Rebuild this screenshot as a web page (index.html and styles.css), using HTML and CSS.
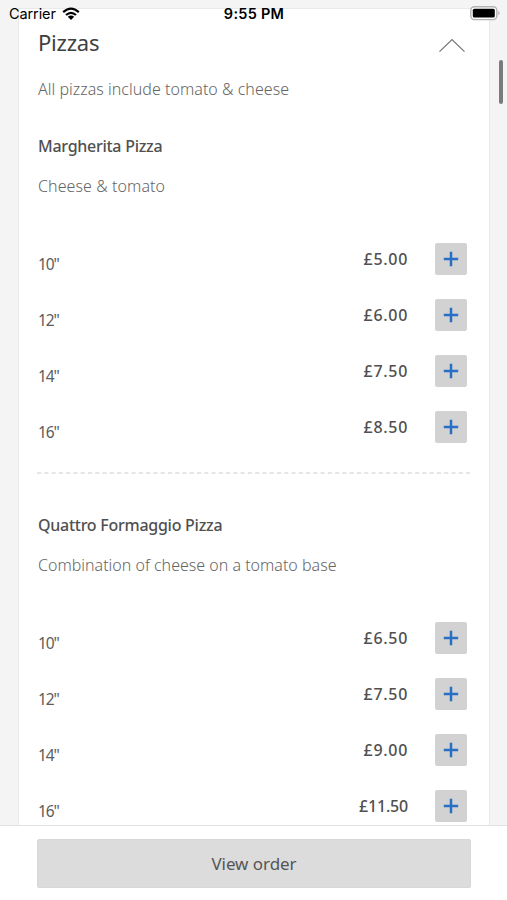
FILE: index.html
```html
<!DOCTYPE html>
<html lang="en">
<head>
<meta charset="utf-8">
<title>Menu</title>
<link rel="stylesheet" href="styles.css">
</head>
<body>
<svg class="defs" width="0" height="0" aria-hidden="true"><symbol id="plus" viewBox="0 0 16 16"><path d="M8 .8v14.4M.8 8h14.4" fill="none" stroke="#2870c5" stroke-width="2.5"/></symbol></svg>
<header class="status">
  <div class="network"><span class="carrier">Carrier</span>
    <svg class="wifi" width="18" height="14" viewBox="0 0 18 14"><path d="M1.2 5.1Q9-2 16.8 5.1M4 8Q9 3.6 14 8" fill="none" stroke="#000" stroke-width="2.2"/><path d="M5.8 9.7Q9 7.2 12.2 9.7L9 13z"/></svg>
  </div>
  <div class="time">9:55 PM</div>
  <svg class="battery" width="31" height="15" viewBox="0 0 31 15"><rect x=".8" y=".8" width="26" height="12.8" rx="3.5" fill="#fff" stroke="#b3b3b3" stroke-width="1.4"/><rect x="2.8" y="2.8" width="22" height="8.8" rx="1.5"/><path d="M28.3 5q2.5 2.2 0 4.4z" fill="#aaa"/></svg>
</header>
<main class="menu">
  <section class="card">
    <div class="section-head">
      <h1 class="title">Pizzas</h1>
      <svg class="chevron" width="28" height="15" viewBox="0 0 28 15"><path d="M1.5 13.6L14 1.6l12.5 12" fill="none" stroke="#777" stroke-width="1.3"/></svg>
    </div>
    <p class="note"><span class="w-note">All pizzas include tomato &amp; cheese</span></p>
    <article class="item">
      <h2 class="name"><span class="w-marg">Margherita Pizza</span></h2>
      <p class="desc"><span class="w-cheese">Cheese &amp; tomato</span></p>
      <ul class="sizes">
        <li class="row"><span class="size">10"</span><span class="price">£5.00</span><button class="add"><svg class="plus"><use href="#plus"/></svg></button></li>
        <li class="row"><span class="size">12"</span><span class="price">£6.00</span><button class="add"><svg class="plus"><use href="#plus"/></svg></button></li>
        <li class="row"><span class="size">14"</span><span class="price">£7.50</span><button class="add"><svg class="plus"><use href="#plus"/></svg></button></li>
        <li class="row"><span class="size">16"</span><span class="price">£8.50</span><button class="add"><svg class="plus"><use href="#plus"/></svg></button></li>
      </ul>
    </article>
    <svg class="divider" width="433" height="2"><path d="M0 1h433" stroke="#dedede" stroke-width="1.3" stroke-dasharray="4.2 3.07"/></svg>
    <article class="item">
      <h2 class="name"><span class="w-quattro">Quattro Formaggio Pizza</span></h2>
      <p class="desc"><span class="w-comb">Combination of cheese on a tomato base</span></p>
      <ul class="sizes">
        <li class="row"><span class="size">10"</span><span class="price">£6.50</span><button class="add"><svg class="plus"><use href="#plus"/></svg></button></li>
        <li class="row"><span class="size">12"</span><span class="price">£7.50</span><button class="add"><svg class="plus"><use href="#plus"/></svg></button></li>
        <li class="row"><span class="size">14"</span><span class="price">£9.00</span><button class="add"><svg class="plus"><use href="#plus"/></svg></button></li>
        <li class="row"><span class="size">16"</span><span class="price narrow">£11.50</span><button class="add"><svg class="plus"><use href="#plus"/></svg></button></li>
      </ul>
    </article>
  </section>
</main>
<div class="scrollbar"></div>
<footer class="order-bar"><button class="order"><span class="w-order">View order</span></button></footer>
</body>
</html>
```

FILE: styles.css
```css
* { box-sizing: border-box; margin: 0; padding: 0; }
body {
  position: relative;
  display: flex;
  flex-direction: column;
  height: 900px;
  overflow: hidden;
  background: #f4f4f4;
  color: #505050;
  font-family: "Noto Sans", "Open Sans", sans-serif;
  font-size: 16px;
}
.defs { position: absolute; }
.status {
  position: absolute;
  inset: 0 0 auto;
  height: 27px;
  display: grid;
  grid-template-columns: 1fr auto 1fr;
  align-items: center;
  padding: 0 6px 0 9px;
  color: #000;
  font: 14.5px/27px Inter, sans-serif;
}
.network { display: flex; align-items: center; gap: 6px; }
.carrier { letter-spacing: -0.1px; }
.time { font-size: 14.5px; font-weight: 600; letter-spacing: 0.25px; margin-right: 2px; }
.battery { justify-self: end; }
.menu { flex: 1; min-height: 0; overflow: hidden; padding: 8px 17px 0 18px; }
.card {
  height: 900px;
  padding: 0 19px;
  background: #fff;
  border: 1px solid #e9e9e9;
  display: flex;
  flex-direction: column;
}
.section-head { display: flex; justify-content: space-between; height: 68px; }
.title { font-size: 22px; font-weight: 400; line-height: 30px; color: #404040; margin-top: 18px; letter-spacing: -0.2px; }
.chevron { margin: 29px 4px 0 0; }
.note { height: 57px; line-height: 24px; color: #666; font-weight: 300; }
.name { font-size: 16px; font-weight: 500; line-height: 24px; height: 39.5px; }
.desc { height: 69.3px; line-height: 24px; color: #666; font-weight: 300; }
.note, .desc, .name { white-space: nowrap; }
.sizes { list-style: none; }
.row { display: flex; align-items: center; height: 56.15px; padding-right: 3px; padding-bottom: 24.15px; }
.size { flex: 1; padding-top: 10px; font-size: 15.5px; line-height: 20px; letter-spacing: -1.1px; color: #5c5c5c; }
.price { margin-right: 27px; font-size: 16px; font-weight: 500; line-height: 20px; letter-spacing: 0.7px; }
.price.narrow { letter-spacing: -0.2px; }
.add {
  display: flex;
  align-items: center;
  justify-content: center;
  width: 32px;
  height: 32px;
  border: 0;
  border-radius: 2px;
  background: #d2d2d2;
}
.plus { width: 16px; height: 16px; }
.divider { flex: none; margin: 4.2px 0 39.5px -1px; }
.scrollbar { position: absolute; top: 60px; right: 4px; width: 4px; height: 44px; border-radius: 2px; background: #7b7b7b; }
.order-bar { position: relative; height: 75px; padding: 13px 36px 12px 37px; background: #fff; border-top: 1px solid #e2e2e2; }
.order { display: block; width: 434px; height: 49px; border: 1px solid #d7d7d7; border-radius: 2px; background: #dcdcdc; color: #555; font: 17px/47px "Noto Sans", "Open Sans", sans-serif; }
.w-note { letter-spacing: 0.03px; }
.w-marg { letter-spacing: -0.27px; }
.w-cheese { letter-spacing: 0.08px; }
.w-quattro { letter-spacing: -0.26px; }
.w-comb { letter-spacing: 0; }
.w-order { letter-spacing: -0.05px; }
```
